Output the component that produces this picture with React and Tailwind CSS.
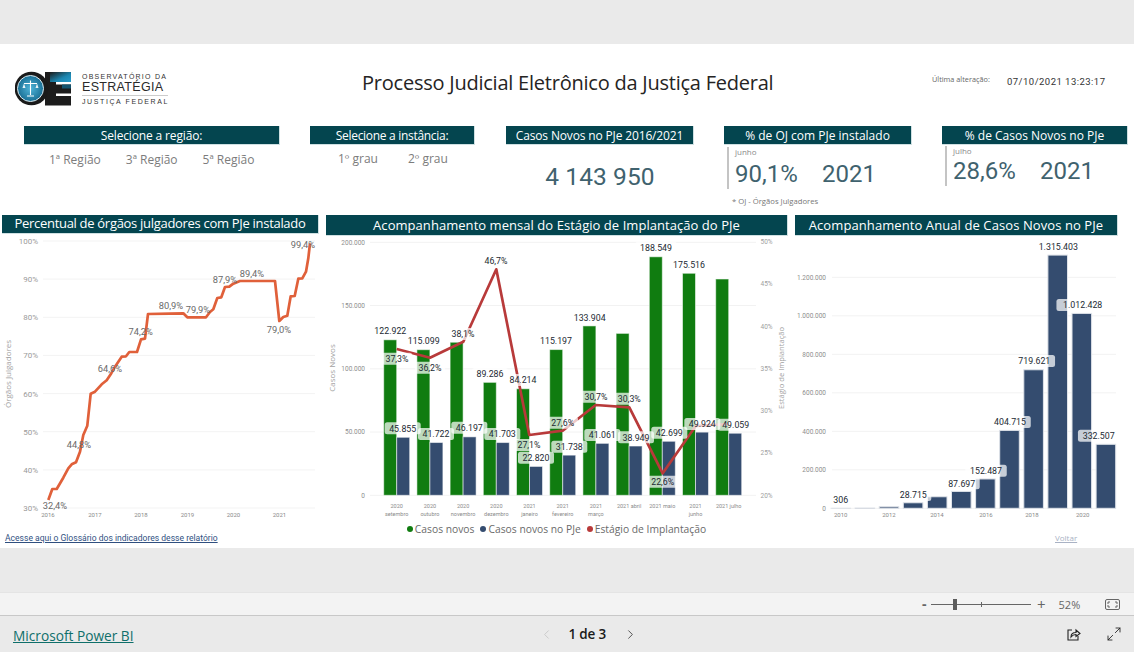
import React from "react";
import { ChevronLeft, ChevronRight, Maximize2 } from "lucide-react";

const P = (pts) => pts.map(([x, y]) => `${(x / 3).toFixed(1)},${(235 + y / 3).toFixed(1)}`).join(" ");

const line1 = [[145,795],[157,762],[170,762],[190,728],[205,700],[215,688],[228,682],[240,650],[250,600],[262,572],[272,476],[285,470],[305,448],[320,436],[332,418],[345,395],[365,365],[378,364],[388,351],[411,351],[423,313],[435,311],[444,237],[510,236],[550,235],[562,247],[618,247],[630,231],[640,223],[652,189],[664,187],[675,156],[688,155],[700,146],[720,138],[825,138],[838,258],[850,246],[862,242],[872,184],[884,183],[895,131],[907,130],[918,110],[925,70],[930,25]];

const y1 = [["100%",241],["90%",279.1],["80%",317.3],["70%",355.4],["60%",393.6],["50%",431.7],["40%",469.9],["30%",508]];
const x1 = [["2016",48],["2017",95],["2018",141],["2019",187.5],["2020",233.5],["2021",279.5]];
const lab1 = [["32,4%",55,505.7],["44,8%",79,445],["64,6%",110,369],["74,2%",140.7,332],["80,9%",171,306],["79,9%",198,309.7],["87,9%",225,280],["89,4%",252,274],["79,0%",279,330],["99,4%",303,245]];

const Y2 = (v) => 495.3 - (v * 253) / 200000;
const months = [
  ["2020","setembro",122922,45855,[396.7,349]],
  ["2020","outubro",115099,41722,[430,357.7]],
  ["2020","novembro",121000,46197,[463.3,341.7]],
  ["2020","dezembro",89286,41703,[496.3,269.3]],
  ["2021","janeiro",84214,22820,[529.3,435]],
  ["2021","fevereiro",115197,31738,[562.7,430.7]],
  ["2021","março",133904,41061,[595.7,405]],
  ["2021 abril","",128000,38949,[629.3,407.3]],
  ["2021 maio","",188549,42699,[662.7,473.3]],
  ["2021","junho",175516,49924,[695.7,426]],
  ["2021 julho","",171000,49059,[729,424]],
];
const labGreen = [["122.922",390.3,331],["115.099",423.7,341],["89.286",490,374],["84.214",523,380],["115.197",556,341],["133.904",589.7,317.7],["188.549",656,247.7],["175.516",689,265]];
const labPct = [["37,3%",397,358.7],["36,2%",430,367.7],["38,1%",463,334],["46,7%",496,261],["27,1%",529,445],["27,6%",562.7,422.7],["30,7%",596,396.7],["30,3%",629.3,398.7],["22,6%",662.7,481.7]];
const labNavy = [["45.855",402.7,428.3],["41.722",436,434],["46.197",469.3,427.7],["41.703",502.3,434],["22.820",536,457.7],["31.738",569.3,446.7],["41.061",602.3,435],["38.949",636,437.3],["42.699",669.3,432.7],["49.924",702.3,424],["49.059",735.7,424.7]];

const Y3 = (v) => 508.3 - (v * 38.5) / 200000;
const years = [306,1500,8000,28715,60000,87697,152487,404715,719621,1315403,1012428,332507];
const lab3 = [["306",840.7,500],["28.715",913.3,495],["87.697",961.7,483.3],["152.487",986,470.7],["404.715",1010,422],["719.621",1034.3,361],["1.315.403",1058.3,246.7],["1.012.428",1082.7,305],["332.507",1098.7,435.7]];

function Pill({ t, x, y, size = 8.8 }) {
  const w = t.length * 5.5 + 3;
  return (
    <g>
      <rect x={x - w / 2} y={y - 6} width={w} height={12} rx={2.5} fill="#fff" fillOpacity={0.72} />
      <text x={x} y={y + 3.2} textAnchor="middle" fontSize={size} fill="#1c2a33">{t}</text>
    </g>
  );
}

function Header({ children, className }) {
  return (
    <div className={`bg-[#04454f] text-white flex items-center justify-center whitespace-nowrap border-r border-b border-[#cfe0e2] ${className}`}>
      {children}
    </div>
  );
}

function Logo() {
  return (
    <div className="flex items-start w-[153px] h-[36px]">
      <svg width="57" height="36" viewBox="15 71 57 36" className="shrink-0">
        <defs>
          <radialGradient id="lg" cx="0.5" cy="0.5" r="0.55">
            <stop offset="0" stopColor="#4fb4d8" />
            <stop offset="1" stopColor="#15698f" />
          </radialGradient>
          <linearGradient id="eg" x1="0" y1="0" x2="1" y2="1">
            <stop offset="0" stopColor="#1c1c1c" />
            <stop offset="0.6" stopColor="#1b86b0" />
            <stop offset="1" stopColor="#2a9ccb" />
          </linearGradient>
        </defs>
        <path d="M45 72H71V82H56V84.5H71V93.5H56V96H71V105.5H45Z" fill="#1c1c1c" />
        <rect x="50" y="72" width="21" height="10" fill="url(#eg)" />
        <rect x="62" y="84.5" width="9" height="4" fill="#14536e" />
        <circle cx="31.5" cy="88.5" r="16.8" fill="#1a1a1a" />
        <circle cx="30.5" cy="88.5" r="13" fill="url(#lg)" stroke="#dcebf0" strokeWidth="1" />
        <path d="M30.5 80.5V95M24 83.5H37M27 96H34" stroke="#fff" strokeWidth="1.1" fill="none" />
        <path d="M22.5 88L24 83.5L25.5 88ZM35.5 88L37 83.5L38.5 88Z" fill="#e8f3f7" />
      </svg>
      <div className="ml-[10px] flex flex-col w-[86px] text-[#333] font-['Liberation_Sans',sans-serif]">
        <div className="text-[7px] leading-[9px] tracking-[1.24px] whitespace-nowrap mt-[1px]">OBSERVATÓRIO DA</div>
        <div className="text-[12.5px] leading-[13px] tracking-[0.32px] whitespace-nowrap text-[#2a2a2a]">ESTRATÉGIA</div>
        <div className="h-px bg-[#cccccc] mt-[1px]" />
        <div className="text-[7px] leading-[10px] tracking-[1.6px] whitespace-nowrap text-[#333] mt-[1px]">JUSTIÇA FEDERAL</div>
      </div>
    </div>
  );
}

function Kpi({ month, pct, line, mt, numMt }) {
  return (
    <div className={`ml-[3px] border-l-2 border-[#c4c4c4] pl-[6px] ${line}`}>
      <div className={`text-[8px] leading-[9px] text-[#8a8a8a] ${mt}`}>{month}</div>
      <div className={`${numMt} flex font-['Roboto',sans-serif] text-[#40626e] text-[24px] leading-[28px] whitespace-nowrap`}>
        <span className="w-[87px]">{pct}</span>
        <span>2021</span>
      </div>
    </div>
  );
}

function Chart1() {
  return (
    <svg width="317" height="296" viewBox="2 234 317 296" className="font-['Roboto',sans-serif] block">
      {y1.map(([t, y]) => (
        <g key={t}>
          <line x1="43" x2="315" y1={y} y2={y} stroke="#f3f3f3" />
          <text x="38" y={y + 3} textAnchor="end" fontSize="8" fill="#9a9a9a">{t}</text>
        </g>
      ))}
      {x1.map(([t, x]) => (
        <text key={t} x={x} y="517" textAnchor="middle" fontSize="6" fill="#8a8a8a">{t}</text>
      ))}
      <text transform="translate(11 374) rotate(-90)" textAnchor="middle" fontSize="8" fill="#a2a2a2" className="font-['Open_Sans',sans-serif]">Órgãos Julgadores</text>
      <polyline points={P(line1)} fill="none" stroke="#e0603a" strokeWidth="2.7" strokeLinejoin="round" />
      {lab1.map(([t, x, y]) => (
        <text key={t} x={x} y={y + 3} textAnchor="middle" fontSize="9.3" fill="#6a6a6a">{t}</text>
      ))}
    </svg>
  );
}

function Chart2() {
  const ys = [["200.000",0],["150.000",50000],["100.000",100000],["50.000",150000],["0",200000]];
  const rs = ["50%","45%","40%","35%","30%","25%","20%"];
  return (
    <svg width="462" height="286" viewBox="326 236 462 286" className="font-['Roboto',sans-serif] block">
      {ys.map(([t, d]) => (
        <g key={t}>
          <line x1="370" x2="756" y1={Y2(200000 - d)} y2={Y2(200000 - d)} stroke="#f2f2f2" />
          <text x="365" y={Y2(200000 - d) + 2.4} textAnchor="end" fontSize="6.5" fill="#8e8e8e">{t}</text>
        </g>
      ))}
      {rs.map((t, i) => (
        <text key={t} x="760.5" y={241.7 + i * 42.27 + 2.4} fontSize="6.5" fill="#a0a0a0">{t}</text>
      ))}
      <text transform="translate(335 368) rotate(-90)" textAnchor="middle" fontSize="8" fill="#a2a2a2" className="font-['Open_Sans',sans-serif]">Casos Novos</text>
      <text transform="translate(783.5 368) rotate(-90)" textAnchor="middle" fontSize="7.6" fill="#a2a2a2" className="font-['Open_Sans',sans-serif]">Estágio de Implantação</text>
      {months.map(([a, b, g, n], i) => {
        const x = 383.7 + i * 33.2;
        return (
          <g key={i}>
            <rect x={x} y={Y2(g)} width="13" height={495.3 - Y2(g)} fill="#107c10" stroke="#fff" strokeOpacity="0.55" />
            <rect x={x + 13} y={Y2(n)} width="13" height={495.3 - Y2(n)} fill="#344c6f" stroke="#fff" strokeOpacity="0.55" />
            <text x={x + 13} y="507.5" textAnchor="middle" fontSize="5.5" fill="#8a8a8a">{a}</text>
            {b && <text x={x + 13} y="515.8" textAnchor="middle" fontSize="5.5" fill="#8a8a8a">{b}</text>}
          </g>
        );
      })}
      <polyline points={months.map((m) => m[4].join(",")).join(" ")} fill="none" stroke="#b83a3a" strokeWidth="2.7" strokeLinejoin="round" />
      {labGreen.map(([t, x, y]) => <Pill key={t} t={t} x={x} y={y} />)}
      {labPct.map(([t, x, y]) => <Pill key={t} t={t} x={x} y={y} />)}
      {labNavy.map(([t, x, y]) => <Pill key={t} t={t} x={x} y={y} />)}
    </svg>
  );
}

function Chart3() {
  const ys = [["1.200.000",1200000],["1.000.000",1000000],["800.000",800000],["600.000",600000],["400.000",400000],["200.000",200000],["0",0]];
  const xs = [["2010",840.7],["2012",889],["2014",937],["2016",986],["2018",1032],["2020",1082.7]];
  return (
    <svg width="323" height="295" viewBox="795 236 323 295" className="font-['Roboto',sans-serif] block">
      {ys.map(([t, v]) => (
        <g key={t}>
          <line x1="832" x2="1116" y1={Y3(v)} y2={Y3(v)} stroke="#f2f2f2" />
          <text x="826" y={Y3(v) + 2.4} textAnchor="end" fontSize="6.5" fill="#8e8e8e">{t}</text>
        </g>
      ))}
      {years.map((v, i) => {
        const x = 831 + i * 24.1;
        return <rect key={i} x={x} y={Y3(v)} width="19.6" height={508.3 - Y3(v)} fill="#344c6f" stroke="#dfe3e9" strokeWidth="1" />;
      })}
      {xs.map(([t, x]) => (
        <text key={t} x={x} y="517" textAnchor="middle" fontSize="6" fill="#8a8a8a">{t}</text>
      ))}
      {lab3.map(([t, x, y]) => <Pill key={t} t={t} x={x} y={y} />)}
    </svg>
  );
}

function Dot({ color, label }) {
  return (
    <div className="flex items-center gap-[2px]">
      <span className={`w-[6px] h-[6px] rounded-full ${color}`} />
      <span>{label}</span>
    </div>
  );
}

export default function App() {
  return (
    <div className="w-[1134px] h-[652px] overflow-hidden flex flex-col bg-[#eaeaea] font-['Open_Sans',sans-serif]">
      <div className="h-[44px] shrink-0" />
      <div className="h-[504px] shrink-0 bg-white flex flex-col">
        <div className="h-[82px] shrink-0 flex items-start pl-[15px] pt-[27px]">
          <Logo />
          <div className="ml-[194px] w-[411px] text-[20px] leading-[26px] mt-[-1px] text-[#252423] whitespace-nowrap tracking-[-0.23px]">
            Processo Judicial Eletrônico da Justiça Federal
          </div>
          <div className="ml-[159px] text-[7.3px] leading-[10px] text-[#666] whitespace-nowrap mt-[3px] w-[75px]">Última alteração:</div>
          <div className="text-[9.5px] leading-[12px] tracking-[0.47px] text-[#333] font-['Roboto',sans-serif] whitespace-nowrap mt-[5px]">07/10/2021 13:23:17</div>
        </div>

        <div className="h-[89px] shrink-0 flex pl-[24px] text-[12px] leading-[19px]">
          <div className="w-[256px]">
            <Header className="h-[19px] tracking-[-0.15px]">Selecione a região:</Header>
            <div className="flex pl-[25px] gap-[25px] mt-[5px] text-[#7c7c7c] text-[12px] leading-[19px]">
              <span>1ª Região</span><span>3ª Região</span><span>5ª Região</span>
            </div>
          </div>
          <div className="w-[165px] ml-[30px]">
            <Header className="h-[19px] tracking-[-0.3px]">Selecione a instância:</Header>
            <div className="flex pl-[28px] gap-[30px] mt-[4px] text-[#7c7c7c] text-[12px] leading-[19px]">
              <span>1º grau</span><span>2º grau</span>
            </div>
          </div>
          <div className="w-[188px] ml-[31px]">
            <Header className="h-[19px] tracking-[-0.15px]">Casos Novos no PJe 2016/2021</Header>
            <div className="mt-[17px] text-center font-['Roboto',sans-serif] text-[#40626e] text-[24.5px] leading-[30px] tracking-[0.1px]">4 143 950</div>
          </div>
          <div className="w-[188px] ml-[30px]">
            <Header className="h-[19px]">% de OJ com PJe instalado</Header>
            <Kpi month="junho" pct="90,1%" line="h-[42px]" mt="mt-[2px]" numMt="mt-[4px]" />
            <div className="ml-[8px] mt-[7px] text-[7.7px] leading-[10px] text-[#777] whitespace-nowrap">* OJ - Órgãos Julgadores</div>
          </div>
          <div className="w-[186px] ml-[30px]">
            <Header className="h-[19px]">% de Casos Novos no PJe</Header>
            <Kpi month="julho" pct="28,6%" line="h-[40px]" mt="mt-[1px]" numMt="mt-[2px]" />
          </div>
        </div>

        <div className="flex-1 flex pl-[2px] gap-[7px]">
          <div className="w-[317px] flex flex-col">
            <Header className="h-[19px] text-[13px] tracking-[-0.3px]">Percentual de órgãos julgadores com PJe instalado</Header>
            <Chart1 />
            <a className="ml-[3px] mt-[2px] font-['Roboto',sans-serif] text-[8.55px] leading-[12px] text-[#2f4f7f] underline whitespace-nowrap">Acesse aqui o Glossário dos indicadores desse relatório</a>
          </div>
          <div className="w-[462px] flex flex-col">
            <Header className="h-[21px] pt-[1px] text-[13px] tracking-[0.05px]">Acompanhamento mensal do Estágio de Implantação do PJe</Header>
            <Chart2 />
            <div className="flex justify-center gap-[6px] text-[10.3px] leading-[14px] text-[#6a6a6a] pr-[1px]">
              <Dot color="bg-[#107c10]" label="Casos novos" />
              <Dot color="bg-[#344c6f]" label="Casos novos no PJe" />
              <Dot color="bg-[#b83a3a]" label="Estágio de Implantação" />
            </div>
          </div>
          <div className="w-[323px] flex flex-col">
            <Header className="h-[21px] pt-[1px] text-[13px] tracking-[0.09px]">Acompanhamento Anual de Casos Novos no PJe</Header>
            <Chart3 />
            <a className="ml-[260px] mt-[2px] text-[8px] leading-[10px] text-[#a9b2c4] underline">Voltar</a>
          </div>
        </div>
      </div>

      <div className="h-[44px] shrink-0" />
      <div className="h-[24px] shrink-0 bg-[#f3f3f3] border-t border-[#e4e4e4] border-b border-b-[#c8c8c8] flex items-center text-[#666]">
        <span className="ml-[922px] w-[7px] text-[14px] leading-none font-bold">-</span>
        <div className="ml-[2px] relative w-[100px] h-px bg-[#666]">
          <span className="absolute left-[22px] top-[-5px] w-[4px] h-[11px] bg-[#5c5c5c]" />
          <span className="absolute left-[50px] top-[-2px] w-px h-[5px] bg-[#666]" />
        </div>
        <span className="ml-[6px] text-[15px] leading-none">+</span>
        <span className="ml-[13px] text-[11px] leading-none">52%</span>
        <svg width="15" height="11" viewBox="0 0 15 11" className="ml-[25px]" fill="none" stroke="#666" strokeWidth="1">
          <rect x="0.5" y="0.5" width="14" height="10" rx="1.5" />
          <path d="M3 5V3H5M10 3H12V5M3 6V8H5M10 8H12V6" />
        </svg>
      </div>
      <div className="flex-1 flex items-center">
        <a className="ml-[13px] mt-[3px] text-[13.7px] leading-[18px] text-[#0f6f6a] underline whitespace-nowrap">Microsoft Power BI</a>
        <ChevronLeft className="ml-[405px] text-[#c4c4c4]" size={15} strokeWidth={1.3} />
        <span className="ml-[15px] w-[47px] text-[13.5px] leading-[18px] text-[#1a1a1a] font-semibold tracking-[-0.2px] whitespace-nowrap">1 de 3</span>
        <ChevronRight className="ml-[7px] text-[#333]" size={15} strokeWidth={1.3} />
        <svg width="15" height="15" viewBox="0 0 15 15" className="ml-[428px]" fill="none" stroke="#222" strokeWidth="1.1">
          <path d="M6 3H2V13H12V9" />
          <path d="M5 10C5 7 7 5.5 10 5.5V3L14 6.5L10 9.5V7.5C8 7.5 6.5 8 5 10Z" />
        </svg>
        <Maximize2 className="ml-[25px] text-[#222]" size={16} strokeWidth={1.3} />
      </div>
    </div>
  );
}
